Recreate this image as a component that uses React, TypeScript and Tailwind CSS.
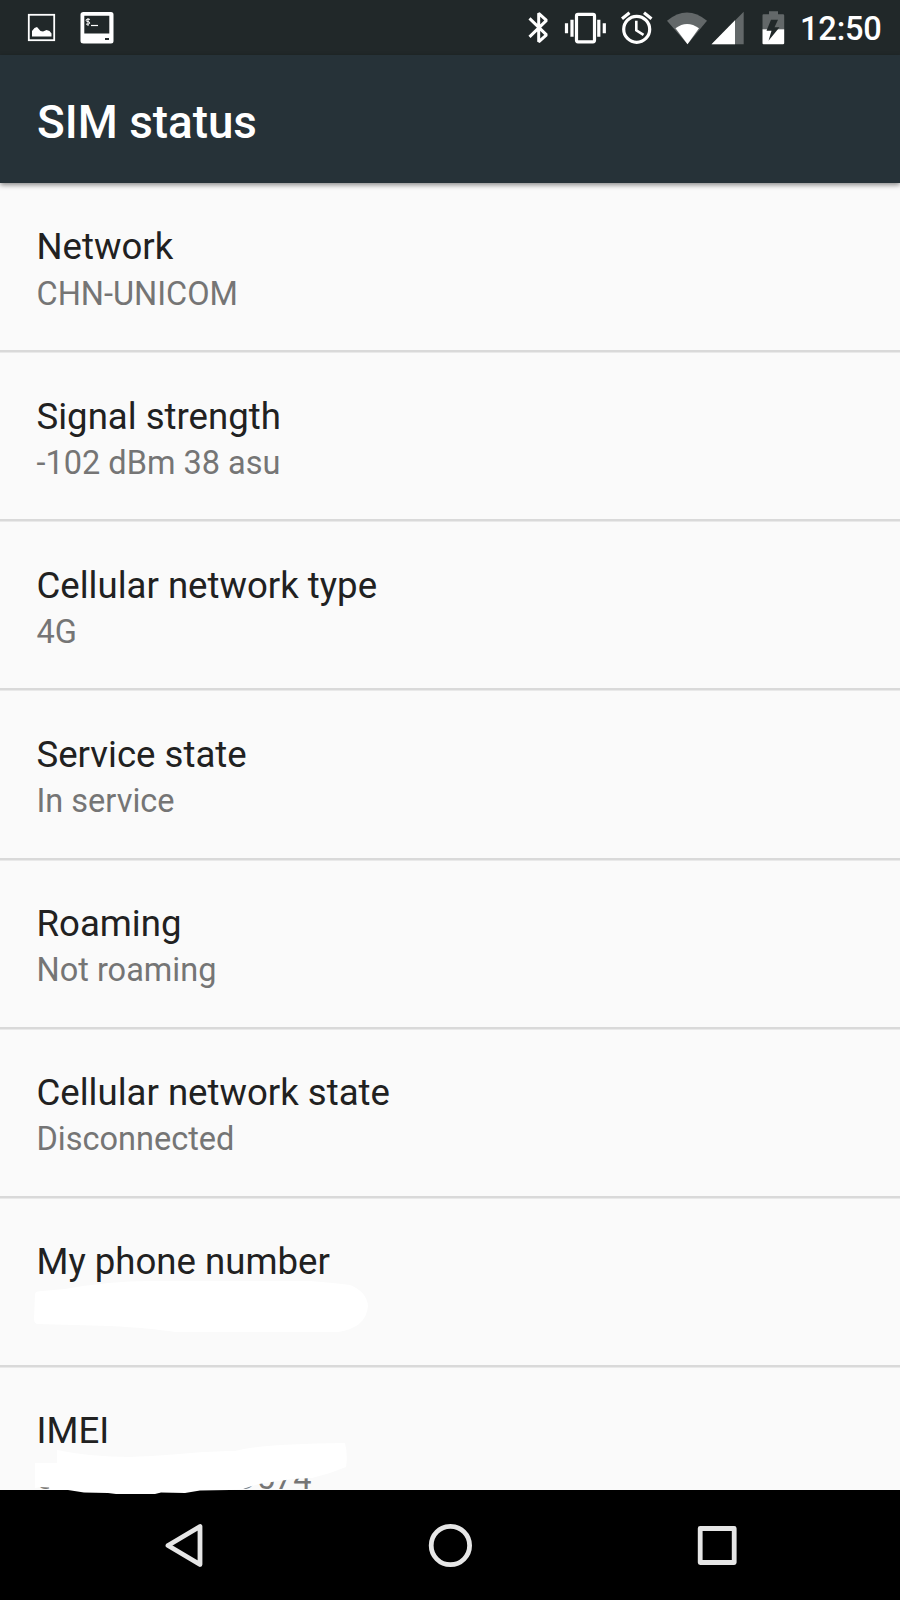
import type { ReactNode } from "react";

type Row = { title: string; summary: ReactNode; cover?: ReactNode };

const PhoneCover = () => (
  <svg className="absolute left-0 top-0 z-10" width="400" height="169" viewBox="0 1198 400 169">
    <path
      d="M35 1294 Q35 1291 42 1291 L65 1289 Q110 1281 150 1281 L310 1281 Q335 1283 350 1285 Q367 1292 368 1306 Q366 1328 338 1332 L175 1332 Q150 1328 110 1326 L37 1324 Q34 1323 34 1319 Z"
      fill="#fff"
    />
  </svg>
);

const ImeiCover = () => (
  <svg className="absolute left-0 top-0 z-10" width="400" height="130" viewBox="0 1367 400 130">
    <path
      d="M35 1463 H57 V1450 Q90 1457 130 1457 C180 1455 200 1451 235 1451 Q260 1444 345 1443 Q348 1455 346 1467 L330 1473 L312 1478 L293 1479 L275 1481.500 L259 1484 L252 1486 L243 1489 L230 1490 L200 1490.500 L185 1493 L161 1492.500 L155 1494 H116 L108 1493 L84 1492.500 L68 1490 L50 1490 L49 1487.500 L40 1487 L35 1488 Z"
      fill="#fff"
    />
  </svg>
);

const rows: Row[] = [
  { title: "Network", summary: "CHN-UNICOM" },
  { title: "Signal strength", summary: "-102 dBm 38 asu" },
  { title: "Cellular network type", summary: "4G" },
  { title: "Service state", summary: "In service" },
  { title: "Roaming", summary: "Not roaming" },
  { title: "Cellular network state", summary: "Disconnected" },
  { title: "My phone number", summary: null, cover: <PhoneCover /> },
  {
    title: "IMEI",
    summary: (
      <span className="flex w-[275px] justify-between">
        <span>8</span>
        <span>9574</span>
      </span>
    ),
    cover: <ImeiCover />,
  },
];

const NotificationIcons = () => (
  <svg width="130" height="55" viewBox="0 0 130 55">
    <rect x="28.800" y="14.800" width="25.400" height="25.400" fill="none" stroke="#fff" strokeWidth="1.800" />
    <path d="M32 36.500 V31 L34.500 28 L37 27 L40.500 31 L43 31.500 L46.500 30 L49.500 31 L51.500 33.500 V36.500 Z" fill="#fff" />
    <path
      fillRule="evenodd"
      d="M83.500 12 H111 Q113.500 12 113.500 14.500 V41 Q113.500 43.500 111 43.500 H83.500 Q80.500 43.500 80.500 41 V14.500 Q80.500 12 83.500 12 Z M84.300 15.700 V33.500 H109.300 V15.700 Z M105 38 V40 H109 V38 Z"
      fill="#fff"
    />
    <path d="M90 19.300 H87 Q85.800 19.500 86 20.700 Q86.300 21.400 88 21.500 Q90 22 89.800 23.200 Q89.500 24.400 86 24.200 M88 18 V26" fill="none" stroke="#fff" strokeWidth="1" />
    <path d="M91 25.500 H98" stroke="#fff" strokeWidth="1.200" />
  </svg>
);

const SystemIcons = () => (
  <svg width="290" height="55" viewBox="510 -0.3 290 55">
    <path d="M529.500 18 L546.500 34.500 L538.700 41.500 V13 L546.500 20 L529.500 36.500" fill="none" stroke="#fff" strokeWidth="3" strokeLinejoin="bevel" />
    <rect x="576.500" y="14" width="18" height="27.500" rx="1.500" fill="none" stroke="#fff" strokeWidth="3.200" />
    <path d="M566.500 23 V33 M572 19.500 V36.500 M598.800 19.500 V36.500 M604.300 23 V33" stroke="#fff" strokeWidth="3.200" />
    <circle cx="636.700" cy="29" r="13" fill="none" stroke="#fff" strokeWidth="3.200" />
    <path d="M636.300 20.500 V30 L643.500 34.500" fill="none" stroke="#fff" strokeWidth="2.600" />
    <path d="M622 18.500 L629.500 12.500 M651.500 18.500 L644 12.500" stroke="#fff" strokeWidth="3.200" />
    <path d="M667 20.500 Q687 4 707 20.500 L687.500 44 Z" fill="#636869" />
    <path d="M675.500 28 Q687 19.500 699 28 L687.500 44 Z" fill="#fff" />
    <path d="M743.700 11.500 V44 H711.500 Z" fill="#636869" />
    <path d="M735 20 V44 H711.500 Z" fill="#fff" />
    <path d="M762.500 29 V15 Q762.500 14 763.500 14 H769 V11 H778 V14 H783 Q784.200 14 784.200 15 V29 Z" fill="#636869" />
    <path d="M762.500 29 H784.200 V43 Q784.200 44 783 44 H763.500 Q762.500 44 762.500 43 Z" fill="#fff" />
    <path d="M771 19.500 H778 L774.500 27 H779.500 L768.500 40.500 L771.500 30.500 H766.500 Z" fill="#212829" />
  </svg>
);

export default function App() {
  return (
    <div className="flex h-[1600px] w-[900px] flex-col overflow-hidden bg-[#fafafa] font-['Roboto',sans-serif]">
      <div className="flex h-[55px] shrink-0 items-center justify-between bg-[#212829] pr-[19px]">
        <NotificationIcons />
        <div className="flex items-center">
          <SystemIcons />
          <span className="w-[81px] whitespace-nowrap pt-1 text-[32.6px] leading-[51px] font-medium tracking-[-0.2px] text-white">12:50</span>
        </div>
      </div>
      <header className="relative flex h-32 shrink-0 items-center bg-[#263238] pl-[37px] shadow-[0_2px_5px_rgba(0,0,0,0.45)]">
        <h1 className="pt-2 text-[45.8px] leading-[54px] font-medium text-white">SIM status</h1>
      </header>
      <main className="flex h-[1307px] shrink-0 flex-col">
        {rows.map((row) => (
          <section
            key={row.title}
            className="relative h-[169.15px] shrink-0 border-b-2 border-[#d9d9d9] pl-[36.5px] pt-[42.4px] shadow-[0_1px_0_#e9e9e9] last:h-[123px] last:border-b-0 last:shadow-none"
          >
            <h2 className="text-[36.6px] leading-[44px] text-[#212121]">{row.title}</h2>
            <div className="mt-[4.2px] text-[32.5px] leading-10 text-[#757575]">{row.summary}</div>
            {row.cover}
          </section>
        ))}
      </main>
      <nav className="relative h-[110px] shrink-0 bg-black">
        <svg width="900" height="110" viewBox="0 1490 900 110" fill="none" stroke="#e6e6e6" strokeWidth="4.800" strokeLinejoin="round">
          <path d="M200 1526.500 V1564.500 L168 1545.500 Z" />
          <circle cx="450.400" cy="1545.500" r="19.200" />
          <rect x="700.200" y="1528.500" width="34" height="34" />
        </svg>
      </nav>
    </div>
  );
}
